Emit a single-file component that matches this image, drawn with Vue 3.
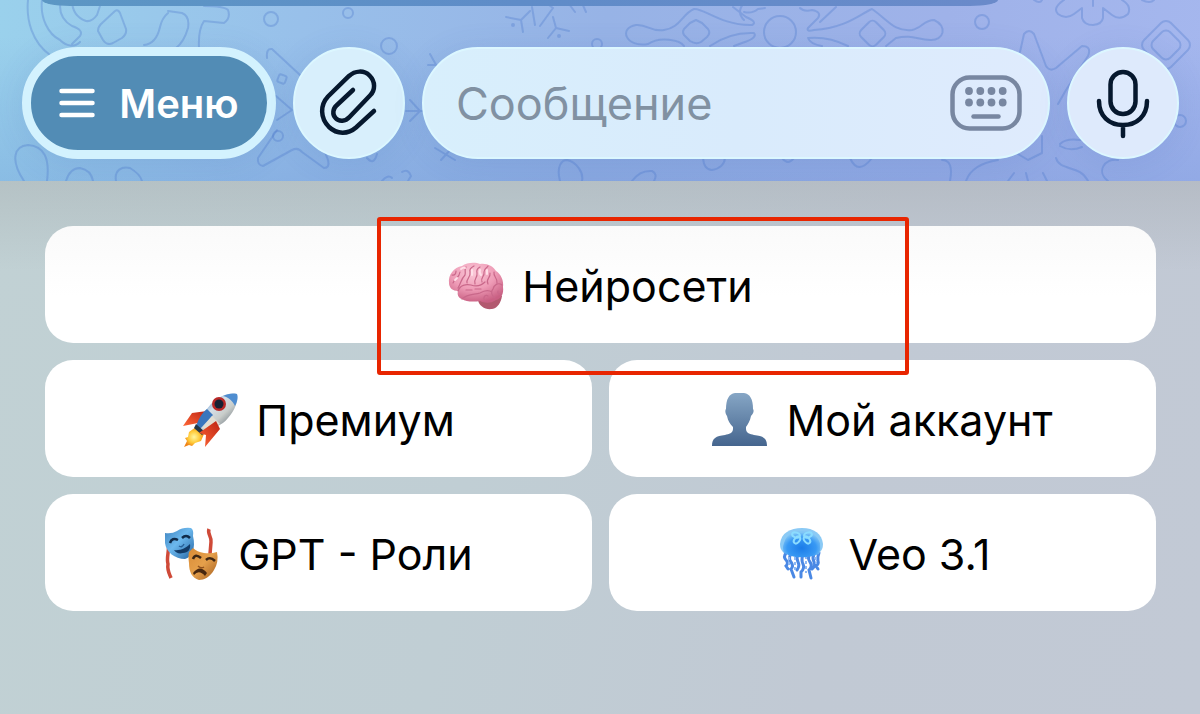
<template>
  <div class="screen">
    <section class="chat">
      <svg class="pattern" viewBox="0 0 1200 181" preserveAspectRatio="xMidYMid slice" aria-hidden="true">
        <!-- ornament, left corner -->
        <path d="M28 0C26 20 32 42 50 55M42 0C40 18 48 34 60 40C66 46 74 48 80 42M61 0C58 12 62 20 72 26Q84 30 80 36L72 44M72 0Q72 16 86 21Q92 22 97 15L100 6M115 11Q118 9 120 13L126 29Q127 34 122 38L113 43Q107 46 103 40L98 31Q98 27 101 24ZM144 45C154 44 158 36 160 27Q162 18 168 13M168 11L182 13Q190 16 188 28Q184 42 176 48M199 48Q198 30 204 21L224 23Q231 18 228 10Q224 6 204 6" />
        <path d="M24 181C10 160 14 146 28 145C44 146 50 158 47 181M66 181Q70 168 80 168Q91 170 93 181M116 181C114 170 122 166 130 168Q140 174 142 181" />
        <!-- star behind the first two buttons -->
        <path d="M267 58Q266 48 272 49L300 75M277 130L258 158Q257 165 263 166L292 150Q298 147 302 152L324 168Q330 168 328 160L318 134M276 96L292 110L277 120" />
        <rect x="278" y="75" width="8" height="8" rx="2" transform="rotate(20 282 79)" />
        <circle cx="278" cy="136" r="5" /><circle cx="271" cy="19" r="7" /><circle cx="348" cy="13" r="5" /><circle cx="389" cy="46" r="8" />
        <path d="M382 181Q388 174 392 178M402 172Q408 168 411 176L408 181M367 158Q374 166 377 154M406 111H428M410 100L420 111L410 121M430 54L440 72M428 65H436M435 148L455 160M452 148L441 160" />
        <!-- snowflake -->
        <path d="M506 17L521 20L530 11M521 20L523 32M532 7L535 25M540 26L553 8L549 5M553 17L556 28L548 38M556 28L569 31M569 4L575 12M582 3L586 12" />
        <circle cx="513" cy="25" r="1" /><circle cx="559" cy="36" r="1" /><circle cx="597" cy="44" r="5" />
        <!-- long flake above the field -->
        <path d="M648 44C626 48 618 28 636 25C648 24 650 32 664 30C680 28 682 14 694 9C702 7 722 26 752 25Q758 22 746 17L733 7M648 44C660 36 680 40 684 46M710 46Q730 32 754 33Q758 38 742 43L734 46M744 20Q736 12 744 3M744 12Q752 14 758 9L765 8" />
        <path d="M690 23L696 20L702 23L708 29Q711 33 707 37L701 42Q696 45 690 41L684 35Q682 32 684 29Z" />
        <circle cx="780" cy="32" r="16" />
        <path d="M836 7L820 22M800 8Q804 12 812 10Q822 12 818 18L808 28Q806 32 814 30C846 28 860 14 872 9C888 20 894 32 912 30C922 28 924 20 934 20C948 26 944 41 930 40C918 40 912 34 896 38L886 46M808 38Q828 36 848 46M808 38Q810 44 822 46" />
        <rect x="862" y="23" width="21" height="21" rx="5" transform="rotate(45 872.500 33.500)" />
        <circle cx="982" cy="22" r="7" />
        <path d="M560 181C556 166 562 160 567 160C576 162 584 172 582 181M632 181Q640 170 652 171Q658 174 654 181M703 158Q704 170 712 170Q724 168 725 158M782 158Q788 166 794 158M850 158Q858 176 872 158" />
        <!-- big flake on the right -->
        <path d="M1064 0Q1052 8 1058 14Q1066 20 1074 14L1082 8V18Q1084 25 1093 25Q1102 24 1103 18V8L1112 15Q1120 21 1128 14Q1132 6 1122 0M1093 0V6M1034 0Q1040 4 1042 0M1142 0Q1150 4 1154 0" />
        <path d="M1020 52L1024 34Q1029 28 1034 34L1046 66Q1050 72 1056 68L1082 46Q1092 46 1088 56L1066 90L1058 104" />
        <rect x="1147" y="26" width="38" height="38" rx="7" transform="rotate(45 1166 45)" />
        <rect x="1154" y="33" width="24" height="24" rx="6" transform="rotate(45 1166 45)" />
        <path d="M1018 154L1028 160L1042 153V136M1060 144Q1066 138 1080 140M1060 146Q1070 152 1082 147M1056 158C1060 172 1080 164 1088 181M942 160Q954 160 950 181M966 181Q972 164 998 160M1008 181L1014 173M1026 173L1028 181M1043 173L1047 181M1108 181C1096 172 1104 158 1118 160" />
        <circle cx="1180" cy="121" r="6" />
      </svg>

      <div class="bubble"></div>

      <form class="composer" @submit.prevent>
        <button type="button" class="menu">
          <svg class="burger" viewBox="0 0 36 30" aria-hidden="true">
            <path d="M2.500 3H33.500M2.500 15H33.500M2.500 27H33.500" />
          </svg>
          <span>Меню</span>
        </button>

        <button type="button" class="round" aria-label="Прикрепить">
          <svg viewBox="0 0 112 112" aria-hidden="true">
            <path d="M81 64L63 80.500C55 87.500 44 87.500 36 80C27 71 27 58 35 49.500L56 29C62 23.500 71 23 76.500 28.500C82.500 34.500 82.500 43 77 48.500L56.500 70C52.500 74.500 46 75 42.500 71C39 67.500 40 61.500 43.500 58.500L60 43" />
          </svg>
        </button>

        <div class="field">
          <input v-model="message" type="text" placeholder="Сообщение" aria-label="Сообщение" />
          <button type="button" class="toggle" aria-label="Клавиатура">
            <svg viewBox="0 0 72 56" aria-hidden="true">
              <rect x="2.500" y="2.500" width="67" height="51" rx="17" />
              <g class="dots">
                <template v-for="y in [16, 27.5]" :key="y">
                  <circle v-for="x in [19, 30.3, 41.5, 52.7]" :key="x" :cx="x" :cy="y" r="3.900" />
                </template>
              </g>
              <path d="M23.500 41.500H48.500" />
            </svg>
          </button>
        </div>

        <button type="button" class="round" aria-label="Голосовое сообщение">
          <svg viewBox="0 0 112 112" aria-hidden="true">
            <rect x="43.500" y="25" width="25" height="42" rx="12.500" />
            <path d="M32 54C32 69 42 78 56 78S80 69 80 54M56 78V89" />
          </svg>
        </button>
      </form>
    </section>

    <section class="keyboard">
      <button v-for="key in keys" :key="key.icon" type="button" class="key" :class="{ wide: key.wide }">
        <svg v-if="key.icon === 'brain'" class="emoji" viewBox="0 0 56 56" aria-hidden="true">
          <defs>
            <radialGradient id="brain" cx=".45" cy=".25" r=".75">
              <stop offset="0" stop-color="#fbc9d8" />
              <stop offset=".55" stop-color="#ee9bb6" />
              <stop offset="1" stop-color="#c96083" />
            </radialGradient>
          </defs>
          <path fill="#b2596f" d="M30 42C31 48 37 52 44 51C50 50 53 44 54 38L44 36Z" />
          <path fill="url(#brain)" d="M1 25C0 17 6 9 14 8C19 4 28 4 32 6C39 5 45 8 48 13C53 16 56 23 55 29C56 36 53 41 48 42C42 46 36 45 32 43C26 44 18 44 14 41C10 40 9 36 10 33C5 33 1 30 1 25Z" />
          <g fill="none" stroke="#c9688a" stroke-width="1.200" stroke-linecap="round">
            <path d="M10 33C12 27 18 26 23 27C29 29 34 27 37 24M14 41C20 35 27 37 32 35C37 32 41 32 44 34M5 25C7 19 11 21 12 14M10 30C13 25 13 21 17 17C18 13 16 12 18 9M19 25C18 20 23 20 22 14C21 11 24 9 26 8M27 26C25 21 30 20 29 15Q28 11 32 9M34 24C32 19 37 19 36 14C36 10 39 10 40 8M40 26C37 21 43 20 42 15M46 14C45 19 50 20 49 25M54 27C50 24 46 27 45 31C42 34 44 38 47 40M37 43C34 39 38 36 40 38M18 32H24M27 31H33M4 17C7 18 8 15 8 13M50 33C49 36 52 37 53 35" />
          </g>
          <path d="M13 11Q16 9 17 10M24 12V17M32 12Q31 15 33 17M39 12V16M7 22L9 20" fill="none" stroke="#ffdfe8" stroke-width="2" stroke-linecap="round" />
        </svg>

        <svg v-else-if="key.icon === 'rocket'" class="emoji" viewBox="0 0 56 56" aria-hidden="true">
          <defs>
            <linearGradient id="hull" x1="0" y1="0" x2="1" y2="1">
              <stop offset=".15" stop-color="#4f8ccb" />
              <stop offset=".4" stop-color="#d5dfe8" />
              <stop offset=".6" stop-color="#c9cdca" />
              <stop offset="1" stop-color="#3e4d5e" />
            </linearGradient>
            <linearGradient id="fin" x1="1" y1="0" x2="0" y2="1">
              <stop offset="0" stop-color="#bd2413" />
              <stop offset="1" stop-color="#ff6737" />
            </linearGradient>
            <radialGradient id="flame">
              <stop offset="0" stop-color="#fff6a0" />
              <stop offset=".6" stop-color="#ffc936" />
              <stop offset="1" stop-color="#ef8318" />
            </radialGradient>
          </defs>
          <path fill="url(#fin)" d="M10 21L25 19L16 31L1 34Z" />
          <path fill="url(#flame)" d="M14 35L7 40L6 45L3 46L5 49L2 55L7 53L10 54L13 51L19 49L22 42Z" />
          <path fill="url(#hull)" d="M55 2C48 0 38 3 29 12C22 20 18 26 15 34L21 39C31 36 40 34 46 26C53 18 56 10 55 2Z" />
          <path fill="#4f8dd0" d="M55 2C50 1 45 2 41 4C46 5 51 9 53 14C56 9 56 4 55 2Z" />
          <path fill="#3976bd" d="M25 17L31 23L18 37L14 34C17 26 20 21 25 17Z" />
          <path fill="#e2ded2" d="M30 24L38 32L25 37L20 36Z" />
          <circle cx="37" cy="12" r="7" fill="#b92928" />
          <circle cx="37" cy="12" r="4.500" fill="#172134" />
          <path fill="#243747" d="M14 32L23 40L20 43L12 36Z" />
          <path fill="url(#fin)" d="M34 29L38 37L23 55L24 43L17 41Z" />
        </svg>

        <svg v-else-if="key.icon === 'person'" class="emoji" viewBox="0 0 56 56" aria-hidden="true">
          <defs>
            <linearGradient id="person" x1="0" y1="0" x2="0" y2="1">
              <stop offset="0" stop-color="#86a6c5" />
              <stop offset="1" stop-color="#45658e" />
            </linearGradient>
          </defs>
          <path fill="url(#person)" d="M23 1H32C38 2 41 7 41 17C42 18 42 21 39 24C38 29 36 32 34 35V37C34 41 38 42 42 43C51 44 55 46 55 54H0C0 46 4 44 13 43C17 42 21 41 21 37V35C18 32 16 29 15 24C13 21 13 18 14 17C14 7 17 2 23 1Z" />
        </svg>

        <svg v-else-if="key.icon === 'masks'" class="emoji" viewBox="0 0 56 56" aria-hidden="true">
          <defs>
            <linearGradient id="comedy" x1="0" y1="0" x2="1" y2="1">
              <stop offset="0" stop-color="#3f83bf" />
              <stop offset=".45" stop-color="#6cb8ed" />
              <stop offset="1" stop-color="#2464a3" />
            </linearGradient>
            <linearGradient id="tragedy" x1="0" y1="0" x2="1" y2="1">
              <stop offset="0" stop-color="#d98b36" />
              <stop offset=".5" stop-color="#e5a04b" />
              <stop offset="1" stop-color="#a35d1f" />
            </linearGradient>
          </defs>
          <path d="M4 16C6 24 2 31 4 38C3 44 5 47 7 52M45 3C43 8 48 11 47 16L46 28" fill="none" stroke="#cf4a38" stroke-width="3.500" />
          <path fill="url(#comedy)" d="M1 7Q8 8 13 5Q19 1 27 2Q30 4 29 10C32 22 28 31 21 33C11 33 2 26 1 17Z" />
          <path fill="#123a66" d="M10 24C16 25 22 22 26 18C27 23 24 27 19 27C15 28 12 27 10 24Z" />
          <path d="M6 17Q8 11 14 14M18 12Q22 8 26 12" fill="none" stroke="#102b49" stroke-width="2.500" />
          <path d="M15 20Q18 22 20 18" fill="none" stroke="#275f96" stroke-width="1.500" />
          <path fill="url(#tragedy)" d="M29 22Q33 26 40 27Q47 28 53 26Q55 36 50 44C46 51 40 54 35 54C28 52 25 46 25 37Q24 30 25 26Z" />
          <path d="M29 33Q31 27 37 32M42 34Q46 30 51 35" fill="none" stroke="#3d2614" stroke-width="2.500" />
          <path fill="#47270f" d="M29 47Q36 38 43 47L41 50Q35 43 30 49Z" />
          <path d="M34 40Q37 43 40 41" fill="none" stroke="#8f511d" stroke-width="1.500" />
        </svg>

        <svg v-else class="emoji" viewBox="0 0 56 56" aria-hidden="true">
          <defs>
            <radialGradient id="bell" cx=".5" cy=".65" r=".6">
              <stop offset="0" stop-color="#1b7ce8" />
              <stop offset=".65" stop-color="#3899f4" />
              <stop offset="1" stop-color="#83c7f6" />
            </radialGradient>
          </defs>
          <g fill="none" stroke="#4a88e4" stroke-width="3" stroke-linecap="round">
            <path d="M12 27Q9 31 12 34T12 40L14 43M17 28Q14 32 17 36T17 43L20 51M24 28Q22 32 24 36T23 44M29 28Q27 34 29 38T27 46V51M36 28Q33 32 36 36T35 44L37 52M40 28Q38 32 40 36T38 43M45 27Q43 32 44 35T42 40L44 43" />
          </g>
          <path d="M15 31V39M21 31V46M32 30V47M42 31V38" fill="none" stroke="#8db8f4" stroke-width="2" stroke-dasharray="3 2" />
          <path fill="#8bcaf5" d="M6 18C7 7 16 2 28 2S48 8 49 18Q49 24 45 27H10Q6 24 6 18Z" />
          <path fill="url(#bell)" d="M10 17C13 7 20 5 28 5S43 8 46 17Q47 23 45 28Q36 32 28 31Q19 32 10 27Q8 22 10 17Z" />
          <g fill="none" stroke="#8bdcff" stroke-width="2">
            <ellipse cx="22" cy="9" rx="4" ry="2.500" transform="rotate(20 22 9)" />
            <ellipse cx="34" cy="9" rx="4" ry="2.500" transform="rotate(-20 34 9)" />
            <ellipse cx="23" cy="14" rx="2.500" ry="4" transform="rotate(40 23 14)" />
            <ellipse cx="33" cy="14" rx="2.500" ry="4" transform="rotate(-40 33 14)" />
          </g>
        </svg>
        <span>{{ key.label }}</span>
      </button>
      <div class="marker"></div>
    </section>
  </div>
</template>

<script setup>
import { ref } from 'vue';

const message = ref('');

const keys = [
  { icon: 'brain', label: 'Нейросети', wide: true },
  { icon: 'rocket', label: 'Премиум' },
  { icon: 'person', label: 'Мой аккаунт' },
  { icon: 'masks', label: 'GPT - Роли' },
  { icon: 'jellyfish', label: 'Veo 3.1' }
];
</script>

<style>
body {
  margin: 0;
}
</style>

<style scoped>
.screen {
  min-height: 100vh;
  display: flex;
  flex-direction: column;
  font-family: Inter, "Liberation Sans", sans-serif;
}

button,
input {
  font: inherit;
  border: 0;
  margin: 0;
  padding: 0;
  background: none;
}

button {
  cursor: pointer;
}

/* chat area */
.chat {
  position: relative;
  overflow: hidden;
  padding-bottom: 22px;
  background:
    linear-gradient(180deg, rgba(90, 130, 205, 0) 20%, rgba(90, 130, 205, 0.25) 100%),
    linear-gradient(95deg, #9ad1ec 0%, #98c0ea 25%, #97b3e6 50%, #9fb2e9 78%, #a5b7ee 100%);
}

.pattern {
  position: absolute;
  inset: 0;
  width: 100%;
  height: 100%;
  fill: none;
  stroke: rgba(78, 122, 204, 0.34);
  stroke-width: 2;
  stroke-linecap: round;
  stroke-linejoin: round;
}

.bubble {
  position: relative;
  height: 6px;
  margin: 0 202px 0 42px;
  border-radius: 0 0 28px 28px / 0 0 6px 6px;
  background: linear-gradient(90deg, #5c97c4, #5f8cc8 50%, #6a8aca);
}

.composer {
  position: relative;
  display: flex;
  gap: 17px;
  margin-top: 41px;
  padding: 0 21px 0 22px;
}

.menu {
  box-sizing: border-box;
  flex: none;
  display: flex;
  align-items: center;
  justify-content: center;
  gap: 24px;
  width: 254px;
  height: 112px;
  border: 9px solid #d3f2fe;
  border-radius: 56px;
  background: #528cb5;
  box-shadow: 0 4px 32px rgba(60, 100, 170, 0.12);
  color: #fff;
  font-size: 40px;
  font-weight: 600;
}

.burger {
  width: 36px;
  height: 30px;
  stroke: #fff;
  stroke-width: 4.5;
  stroke-linecap: round;
}

.round {
  box-sizing: border-box;
  flex: none;
  width: 112px;
  height: 112px;
  border: 2px solid #dcf7ff;
  border-radius: 50%;
  background: #d8effc;
  box-shadow: 0 4px 32px rgba(60, 100, 170, 0.12);
}

.round:last-child {
  background: #deeafc;
}

.round svg {
  display: block;
  width: 112px;
  height: 112px;
  margin: -2px;
  fill: none;
  stroke: #06182e;
  stroke-width: 4.5;
  stroke-linecap: round;
}

.field {
  box-sizing: border-box;
  flex: 1;
  min-width: 0;
  display: flex;
  align-items: center;
  height: 112px;
  padding: 0 26px 0 32px;
  border: 2px solid #dcf7ff;
  border-radius: 56px;
  background: linear-gradient(90deg, #d8effc, #d9ebfc 50%, #dfebfd);
  box-shadow: 0 4px 32px rgba(60, 100, 170, 0.12);
}

.field input {
  flex: 1;
  min-width: 0;
  height: 100%;
  outline: none;
  color: #06182e;
  font-size: 45px;
}

.field input::placeholder {
  color: #8191a2;
  opacity: 1;
}

.toggle svg {
  display: block;
  width: 72px;
  height: 56px;
  fill: none;
  stroke: #7887a1;
  stroke-width: 4.5;
  stroke-linecap: round;
}

.dots {
  fill: #7887a1;
  stroke: none;
}

/* reply keyboard */
.keyboard {
  position: relative;
  flex: 1;
  display: grid;
  grid-template-columns: 1fr 1fr;
  grid-auto-rows: 117px;
  align-content: start;
  gap: 17px;
  padding: 45px 44px 45px 45px;
  background:
    linear-gradient(180deg, rgba(150, 155, 158, 0.28) 0, rgba(150, 155, 158, 0) 90px),
    linear-gradient(100deg, #c1d1d4 0%, #c0ced4 40%, #c1c9d4 70%, #c2c9d5 100%);
}

.key {
  display: flex;
  align-items: center;
  justify-content: center;
  gap: 18px;
  padding-top: 2px;
  border-radius: 28px;
  background: #fff;
  color: #000;
  font-size: 43px;
}

.key.wide {
  grid-column: 1 / -1;
  background: linear-gradient(180deg, #fafafa, #fff 60%);
}

.emoji {
  flex: none;
  width: 56px;
  height: 56px;
}

/* highlight frame over the first row */
.marker {
  box-sizing: border-box;
  position: absolute;
  top: 36px;
  left: calc(50% - 223px);
  width: 532px;
  height: 158px;
  border: 4px solid #e82500;
  border-radius: 3px;
  pointer-events: none;
}
</style>
